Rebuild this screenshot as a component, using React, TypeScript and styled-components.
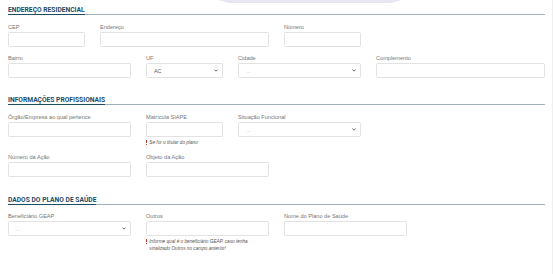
import React from "react";
import styled, { createGlobalStyle } from "styled-components";

const Global = createGlobalStyle`
  html, body { margin: 0; padding: 0; background: #ffffff; }
  body { font-family: "Liberation Sans", Arial, sans-serif; }
  * { box-sizing: border-box; }
`;

const Page = styled.div`
  position: relative;
  width: 553px;
  height: 274px;
  overflow: hidden;
  padding: 7px 8px 0 8px;
  background: #fff;
  &::before {
    content: "";
    position: absolute;
    top: 0;
    left: 218px;
    width: 184px;
    height: 3px;
    background: #e6e6f1;
    clip-path: polygon(0 0, 100% 0, 94% 100%, 6% 100%);
  }
  &::after {
    content: "";
    position: absolute;
    top: 0;
    right: 0;
    width: 1px;
    height: 100%;
    background: #efefef;
  }
`;

const Section = styled.section<{ $mt: number }>`
  margin-top: ${(p) => p.$mt}px;
  width: 537px;
`;

const Heading = styled.h5`
  margin: 0;
  font-family: Roboto, "Liberation Sans", sans-serif;
  font-weight: 700;
  font-size: 6.7px;
  line-height: 7px;
  color: #1d4c66;
  border-bottom: 1px solid #9fb1b6;
  text-transform: uppercase;
`;

const HeadingText = styled.span`
  display: inline-block;
  border-bottom: 1px solid #1d4c66;
  margin-bottom: -1px;
`;

const Grid = styled.div<{ $mt: number }>`
  display: grid;
  grid-template-columns: repeat(12, 31px);
  column-gap: 15px;
  row-gap: 8px;
  margin-top: ${(p) => p.$mt}px;
  align-items: start;
`;

const Field = styled.div<{ $span: number; $start?: number }>`
  grid-column: ${(p) => (p.$start ? `${p.$start} / span ${p.$span}` : `span ${p.$span}`)};
  display: flex;
  flex-direction: column;
`;

const Label = styled.label`
  font-size: 5.6px;
  line-height: 7px;
  color: #767676;
  margin-bottom: 1px;
  white-space: nowrap;
`;

const Input = styled.div`
  height: 15px;
  border: 1px solid #e2e2e2;
  border-radius: 1.5px;
  background: #fff;
`;

const Select = styled.div<{ $placeholder?: boolean }>`
  height: 15px;
  border: 1px solid #e2e2e2;
  border-radius: 1.5px;
  background: #fff;
  display: flex;
  align-items: center;
  justify-content: space-between;
  padding: 0 4px 0 7px;
  font-size: 5.4px;
  color: ${(p) => (p.$placeholder ? "#b8b8b8" : "#5a5a5a")};
`;

const Helper = styled.div`
  margin-top: 2px;
  display: flex;
  align-items: flex-start;
  gap: 2px;
  font-size: 4.7px;
  line-height: 7px;
  font-style: italic;
  color: #555;
  white-space: nowrap;
`;

const Bang = styled.span`
  display: inline-block;
  width: 1.3px;
  height: 4.5px;
  margin-top: 1.3px;
  background: linear-gradient(#c0392b 0 70%, transparent 70% 82%, #c0392b 82%);
  flex: none;
`;

const Chevron = () => (
  <svg width="4" height="3" viewBox="0 0 4 3" fill="none">
    <path d="M0.4 0.5 L2 2.2 L3.6 0.5" stroke="#444" strokeWidth="0.8" />
  </svg>
);

const TextField = ({ label, span, start }: { label: string; span: number; start?: number }) => (
  <Field $span={span} $start={start}>
    <Label>{label}</Label>
    <Input />
  </Field>
);

const SelectField = ({
  label,
  span,
  value,
  placeholder,
  start,
}: {
  label: string;
  span: number;
  value: string;
  placeholder?: boolean;
  start?: number;
}) => (
  <Field $span={span} $start={start}>
    <Label>{label}</Label>
    <Select $placeholder={placeholder}>
      <span>{value}</span>
      <Chevron />
    </Select>
  </Field>
);

export default function App() {
  return (
    <>
      <Global />
      <Page>
        <Section $mt={0}>
          <Heading>
            <HeadingText>Endereço Residencial</HeadingText>
          </Heading>
          <Grid $mt={9}>
            <TextField label="CEP" span={2} />
            <TextField label="Endereço" span={4} />
            <TextField label="Número" span={2} />
            <TextField label="Bairro" span={3} start={1} />
            <SelectField label="UF" span={2} value="AC" />
            <SelectField label="Cidade" span={3} value="..." placeholder />
            <TextField label="Complemento" span={4} />
          </Grid>
        </Section>

        <Section $mt={19}>
          <Heading>
            <HeadingText>Informações Profissionais</HeadingText>
          </Heading>
          <Grid $mt={9}>
            <TextField label="Órgão/Empresa ao qual pertence" span={3} />
            <Field $span={2}>
              <Label>Matrícula SIAPE</Label>
              <Input />
              <Helper>
                <Bang />
                <span>Se for o titular do plano</span>
              </Helper>
            </Field>
            <SelectField label="Situação Funcional" span={3} value="..." placeholder />
            <TextField label="Número da Ação" span={3} start={1} />
            <TextField label="Objeto da Ação" span={3} />
          </Grid>
        </Section>

        <Section $mt={20}>
          <Heading>
            <HeadingText>Dados do Plano de Saúde</HeadingText>
          </Heading>
          <Grid $mt={8}>
            <SelectField label="Beneficiário GEAP" span={3} value="..." placeholder />
            <Field $span={3}>
              <Label>Outros</Label>
              <Input />
              <Helper>
                <Bang />
                <span>
                  Informe qual é o beneficiário GEAP, caso tenha
                  <br />
                  sinalizado Outros no campo anterior!
                </span>
              </Helper>
            </Field>
            <TextField label="Nome do Plano de Saúde" span={3} />
          </Grid>
        </Section>
      </Page>
    </>
  );
}
